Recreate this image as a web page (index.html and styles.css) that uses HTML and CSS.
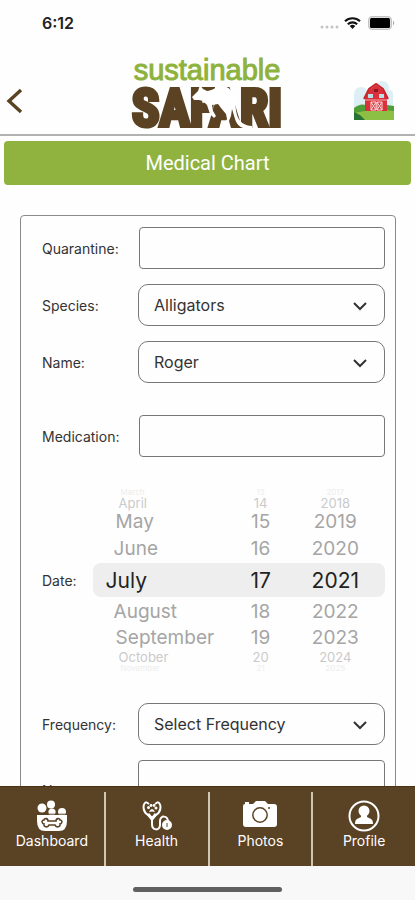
FILE: index.html
```html
<!DOCTYPE html>
<html lang="en">
<head>
<meta charset="utf-8">
<meta name="viewport" content="width=device-width, initial-scale=1">
<title>Medical Chart</title>
<link rel="stylesheet" href="styles.css">
</head>
<body>
<div class="status">
  <span class="time">6:12</span>
  <svg class="status-icons" width="76" height="16" viewBox="0 0 76 16" aria-hidden="true">
    <g fill="#c4c4c4"><circle cx="3" cy="12" r="1.5"/><circle cx="8" cy="12" r="1.5"/><circle cx="13" cy="12" r="1.5"/><circle cx="18" cy="12" r="1.5"/></g>
    <g fill="none" stroke="#111" stroke-width="2.1"><path d="M26 6.2a11.2 11.2 0 0 1 15 0"/><path d="M28.800 9.200a7 7 0 0 1 9.400 0"/></g>
    <path d="M30.700 10.900a4.200 4.200 0 0 1 5.600 0L33.500 14z" fill="#111"/>
    <rect x="49.500" y="1.500" width="23" height="13" rx="3.500" fill="#ddd" stroke="#c4c4c4"/>
    <rect x="51" y="3" width="20" height="10" rx="1.500" fill="#000"/>
    <path d="M74 5.500q2.500 2.500 0 5z" fill="#aaa"/>
  </svg>
</div>
<header class="header">
  <button class="back" type="button" aria-label="Back">
    <svg width="18" height="28" viewBox="0 0 18 28"><path d="M16 3L4 14l12 11" fill="none" stroke="#5b4223" stroke-width="3.400"/></svg>
  </button>
  <svg class="logo" width="154" height="78" viewBox="0 0 154 78" role="img" aria-label="Sustainable Safari">
    <text class="logo-top" x="76" y="26" text-anchor="middle">sustainable</text>
    <text class="logo-main" x="76" y="72" text-anchor="middle">SAFARI</text>
    <path fill="#fff" d="M61 43L67 37L69 31L72 35L76 37C81 37 84 33 90 32C97 32 101 36 103 42C105 49 104 55 106 61C108 68 114 72 121 72L121 75C112 76 106 72 104 65L101 55L100 62L98 67L100 74H94L93 71L96 65L95 60L90 54L87 50L81 51L82 57L85 62L83 64L79 60L76 51L72 47L68 46L63 46Z"/>
  </svg>
  <a class="farm" href="#farm" aria-label="Farm">
    <svg width="42" height="42" viewBox="0 0 42 42">
      <g fill="#dceff5"><circle cx="8" cy="14" r="7"/><circle cx="29" cy="8" r="7"/><circle cx="36" cy="14" r="4"/><rect x="1" y="14" width="39" height="14"/></g>
      <path d="M1 28q7-6 15-2 10-3 25 0v14H1z" fill="#4f9d37"/>
      <path d="M1 33q20-5 40-2v9H1z" fill="#8cc044"/>
      <path d="M1 32l6 3 5 5H1z" fill="#287333"/>
      <path d="M12 18l4-8 7-5 7 5 4 8v13H12z" fill="#d9303a"/>
      <path d="M11 19l5-10 7-5 7 5 5 10" fill="none" stroke="#c9252d" stroke-width="2"/>
      <rect x="21" y="9" width="4" height="3" fill="#8d1821"/>
      <rect x="15" y="14" width="5" height="4" fill="#b9dfe8"/><rect x="26" y="14" width="5" height="4" fill="#b9dfe8"/>
      <path d="M12 20h22" stroke="#f4a7a7"/>
      <path d="M18 22h5v8h-5zM24 22h5v8h-5zM18 22l5 8M23 22l-5 8M24 22l5 8M29 22l-5 8" stroke="#f7d9d9" fill="none"/>
    </svg>
  </a>
</header>
<h1 class="title">Medical Chart</h1>
<main class="main">
  <form class="card">
    <div class="row"><label for="quarantine">Quarantine:</label><input class="field" id="quarantine" type="text"></div>
    <div class="row"><label for="species">Species:</label>
      <div class="select"><select id="species"><option>Alligators</option></select><svg width="14" height="9" viewBox="0 0 14 9"><path d="M1 1l6 6 6-6"/></svg></div></div>
    <div class="row"><label for="name">Name:</label>
      <div class="select"><select id="name"><option>Roger</option></select><svg width="14" height="9" viewBox="0 0 14 9"><path d="M1 1l6 6 6-6"/></svg></div></div>
    <div class="row spaced"><label for="medication">Medication:</label><input class="field" id="medication" type="text"></div>
    <div class="date-row">
      <span id="date-label">Date:</span>
      <div class="picker" role="group" aria-labelledby="date-label">
        <div class="tick edge"><span>March</span><span>13</span><span>2017</span></div>
        <div class="tick far"><span>April</span><span>14</span><span>2018</span></div>
        <div class="tick mid"><span>May</span><span>15</span><span>2019</span></div>
        <div class="tick near"><span>June</span><span>16</span><span>2020</span></div>
        <div class="tick chosen"><span>July</span><span>17</span><span>2021</span></div>
        <div class="tick near"><span>August</span><span>18</span><span>2022</span></div>
        <div class="tick mid"><span>September</span><span>19</span><span>2023</span></div>
        <div class="tick far"><span>October</span><span>20</span><span>2024</span></div>
        <div class="tick edge"><span>November</span><span>21</span><span>2025</span></div>
      </div>
    </div>
    <div class="row"><label for="frequency">Frequency:</label>
      <div class="select"><select id="frequency"><option>Select Frequency</option></select><svg width="14" height="9" viewBox="0 0 14 9"><path d="M1 1l6 6 6-6"/></svg></div></div>
    <div class="row"><label for="notes">Notes:</label><textarea class="notes" id="notes"></textarea></div>
  </form>
</main>
<nav class="nav">
  <a href="#dashboard">
    <svg width="32" height="32" viewBox="0 0 32 32">
      <g fill="#fff"><circle cx="6" cy="8" r="4.500"/><circle cx="15" cy="4.500" r="4"/><circle cx="16" cy="12" r="3.600"/><circle cx="26" cy="12" r="4"/><path d="M1 15h30v6q0 10-8 10H9q-8 0-8-10z"/></g>
      <path d="M1 14.200h30" stroke="#5a4224" stroke-width="1"/>
      <path d="M12 21h8c0-3 4-3 4-1 3 0 2 4 0 4 1 3-4 4-5 1h-6c-1 3-6 2-5-1-2 0-3-4 0-4 0-2 4-2 4 1z" fill="#fff" stroke="#5a4224" stroke-width="1.600"/>
    </svg><span>Dashboard</span></a>
  <a href="#health">
    <svg width="32" height="32" viewBox="0 0 32 32" fill="none" stroke="#fff" stroke-width="2">
      <path d="M5 2C1 5 2 12 7 15l4 3 4-3c5-3 6-10 2-13M5 2l3 2M17 2l-3 2"/><path d="M7 14l4 5 4-5" stroke-width="3"/>
      <path d="M11 18v6c0 7 8 7 8 1v-4c0-6 8-6 8 1v1"/><circle cx="26" cy="25" r="4" fill="#fff"/><path d="M26 23v4" stroke="#5a4224" stroke-width="1"/>
      <g fill="#fff" stroke="none"><circle cx="7.500" cy="7.500" r="1.500"/><circle cx="10" cy="5.500" r="1.400"/><circle cx="13" cy="5.500" r="1.400"/><circle cx="15" cy="8" r="1.500"/><path d="M8 12q3-6 6 0-3-1-6 0z"/></g>
    </svg><span>Health</span></a>
  <a href="#photos">
    <svg width="36" height="32" viewBox="0 0 36 32">
      <path d="M3 4V2h4v2h4l3-3h9l3 3h6q3 0 3 3v17q0 3-3 3H4q-3 0-3-3V6q0-2 2-2z" fill="#fff"/>
      <circle cx="18" cy="15" r="7.200" fill="none" stroke="#5a4224" stroke-width="1.500"/><circle cx="27" cy="8" r="1" fill="#5a4224"/>
    </svg><span>Photos</span></a>
  <a href="#profile">
    <svg width="32" height="32" viewBox="0 0 32 32">
      <circle cx="16" cy="16" r="14.500" fill="none" stroke="#fff" stroke-width="2"/>
      <circle cx="16" cy="11" r="5.500" fill="#fff"/><path d="M13 15h6v2l4 2q2 1 2 5H7q0-4 2-5l4-2z" fill="#fff"/>
    </svg><span>Profile</span></a>
</nav>
<div class="home"><span class="home-bar"></span></div>
</body>
</html>
```
FILE: styles.css
```css
* { box-sizing: border-box; }

body {
  margin: 0;
  height: 100vh;
  display: flex;
  flex-direction: column;
  overflow: hidden;
  background: #fefefe;
  color: #333;
  font-family: Inter, "Liberation Sans", sans-serif;
  font-size: 14px;
}

svg { display: block; flex: none; }

.status {
  display: flex;
  justify-content: space-between;
  align-items: center;
  height: 46px;
  padding: 0 20px 0 42px;
}
.time { color: #222; font-size: 16px; font-weight: 600; }

.header {
  display: grid;
  grid-template-columns: 1fr auto 1fr;
  align-items: center;
  height: 90px;
  padding-top: 6px;
  border-bottom: 2px solid #b2b2b2;
}
.back { justify-self: start; padding: 16px 0 0 5px; border: 0; background: none; }
.farm { justify-self: end; padding: 16px 20px 0 0; }
.logo-top {
  fill: #8db33e;
  stroke: #8db33e;
  stroke-width: 1px;
  font: 29px "Liberation Sans", sans-serif;
}
.logo-main {
  fill: #5b4223;
  stroke: #5b4223;
  stroke-width: 4px;
  font: bold 51px "Liberation Sans Narrow", "Roboto Condensed", sans-serif;
}

.title {
  margin: 5px 4px 0;
  border-radius: 4px;
  background: #90b33f;
  color: #fff;
  font: 20px/44px Roboto, sans-serif;
  text-align: center;
}

.main { flex: 1; min-height: 0; overflow: hidden; padding: 30px 19px 0 20px; }

.card {
  display: flex;
  flex-direction: column;
  gap: 15px;
  padding: 11px 10px 20px 21px;
  border: 1px solid #8a8a8a;
  border-radius: 4px;
}
.row { display: grid; grid-template-columns: 96px 1fr; align-items: center; }
.spaced { margin-top: 17px; }

.field, .notes, select {
  width: 100%;
  height: 42px;
  border: 1px solid #777;
  border-radius: 4px;
  background: #fefefe;
  color: #333;
  font: 16px Inter, sans-serif;
}
.field { width: calc(100% - 1px); margin-left: 1px; padding: 0 12px; }
.notes { display: block; height: 60px; padding: 12px; resize: none; }

.select { position: relative; }
select { appearance: none; padding: 0 36px 0 15px; border-radius: 10px; }
.select svg {
  position: absolute;
  right: 18px;
  top: 18px;
  fill: none;
  stroke: #333;
  stroke-width: 2;
  pointer-events: none;
}

.date-row { display: flex; align-items: center; gap: 16px; margin: 16px 0; }
.picker { flex: 1; }
.tick {
  display: grid;
  align-items: center;
  color: #a5a5a5;
}
.tick span:nth-child(n + 2) { text-align: center; }
.edge { height: 8px; padding-left: 28px; grid-template-columns: 115px 50px 1fr; color: #ededed; font-size: 8px; line-height: 8px; }
.far { height: 14px; padding-left: 26px; grid-template-columns: 117px 50px 1fr; color: #cacaca; font-size: 13px; line-height: 14px; }
.mid { height: 24px; padding-left: 23px; grid-template-columns: 120px 50px 1fr; font-size: 19px; line-height: 24px; }
.near { height: 29px; padding-left: 21px; grid-template-columns: 122px 50px 1fr; font-size: 19px; }
.chosen {
  height: 34px;
  padding-left: 13px;
  grid-template-columns: 130px 50px 1fr;
  border-radius: 8px;
  background: #eee;
  color: #222;
  font-size: 21px;
}

.nav {
  display: grid;
  grid-template-columns: repeat(4, 1fr);
  height: 80px;
  padding-top: 5px;
  border-top: 1px solid #49320f;
  background: #5a4224;
}
.nav a {
  display: flex;
  flex-direction: column;
  align-items: center;
  padding-top: 8px;
  color: #fff;
  font-size: 14px;
  line-height: 17px;
  text-decoration: none;
}
.nav a + a { border-left: 2px solid #cfc6b8; }

.home {
  display: flex;
  justify-content: center;
  height: 34px;
  padding-top: 21px;
  background: #f8f8f8;
}
.home-bar { width: 36%; height: 5px; border-radius: 3px; background: #606060; }
```
